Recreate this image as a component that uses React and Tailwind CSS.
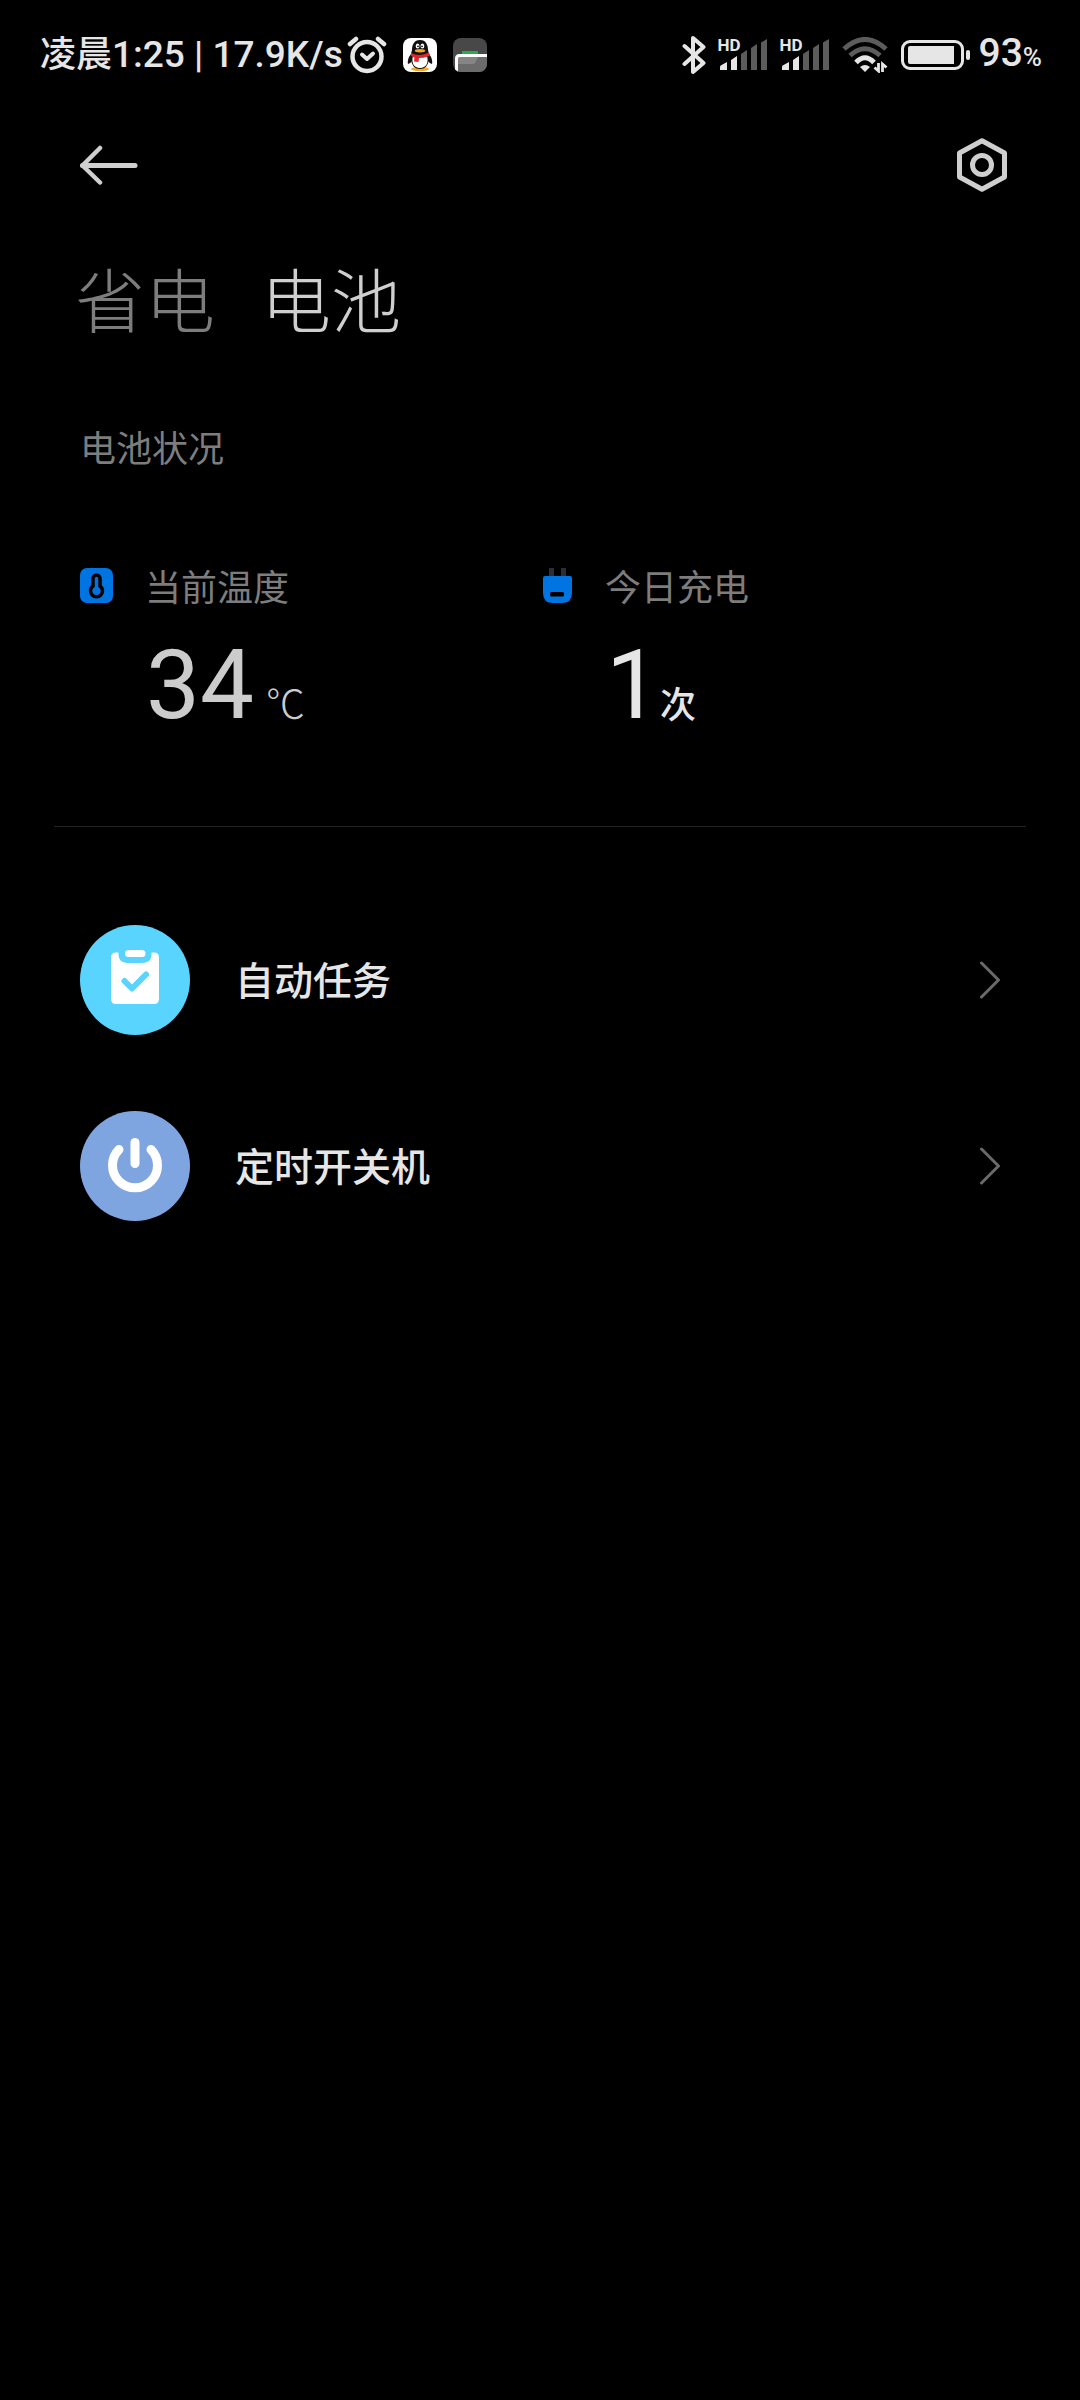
const dimText = "text-[#7d7d7d]";

function AlarmIcon() {
  return (
    <svg width="40" height="38" viewBox="0 0 40 38" fill="none" stroke="#e6e6e6" strokeLinecap="round">
      <circle cx="20" cy="20.500" r="14.500" strokeWidth="4.500" />
      <path d="M3 8 L9 3 M37 8 L31 3" strokeWidth="4.500" />
      <path d="M15 18.500 L20 23 L26 17.500" strokeWidth="4" strokeLinejoin="round" />
    </svg>
  );
}

function QQIcon() {
  return (
    <svg width="34" height="34" viewBox="0 0 34 34">
      <rect width="34" height="34" rx="8" fill="#fff" />
      <ellipse cx="17" cy="31" rx="9" ry="2" fill="#f5a81c" />
      <path d="M8 16 Q4 21 5 26 Q7 26 9 23 Z M26 16 Q30 21 29 26 Q27 26 25 23 Z" fill="#111" />
      <path d="M17 2 C11 2 9 7 9 12 C7 18 7 31 17 31 C27 31 27 18 25 12 C25 7 23 2 17 2 Z" fill="#111" />
      <path d="M10 18 Q17 21 24 18 C26 25 23 30 17 30 C11 30 8 25 10 18 Z" fill="#fff" />
      <ellipse cx="14.6" cy="8" rx="1.9" ry="2.6" fill="#fff" />
      <ellipse cx="19.4" cy="8" rx="1.9" ry="2.6" fill="#fff" />
      <circle cx="15" cy="8.3" r="0.9" fill="#111" />
      <circle cx="19" cy="8.3" r="0.9" fill="#111" />
      <ellipse cx="17" cy="12.7" rx="5.2" ry="1.7" fill="#f5a81c" />
      <path d="M8 15 Q17 19 26 14.5 L27 17.5 Q22 20 16 20 L15.5 24 L11 23.5 L11.5 19.5 L8 18 Z" fill="#e3242b" />
    </svg>
  );
}

function CardIcon() {
  return (
    <svg width="34" height="34" viewBox="0 0 34 34">
      <clipPath id="card-clip">
        <rect width="34" height="34" rx="8" />
      </clipPath>
      <g clipPath="url(#card-clip)">
        <rect width="34" height="34" fill="#484848" />
        <rect x="9" y="13" width="16" height="4" fill="#1fb14c" />
        <path d="M3.5 34 V20 Q3.5 17.5 6 17.5 H34 V34 Z" fill="#6b6b6b" />
        <path d="M5 19 H25 L22 25 Q21 26 20 26 H5 Z" fill="#858585" />
        <path d="M3.5 34 V20.5 Q3.5 17.5 6.5 17.5 H34" fill="none" stroke="#fff" strokeWidth="3" />
      </g>
    </svg>
  );
}

function BluetoothIcon() {
  return (
    <svg width="24" height="40" viewBox="0 0 24 40" fill="none" stroke="#e6e6e6" strokeWidth="4" strokeLinecap="round" strokeLinejoin="round">
      <path d="M2.5 11 L21.5 28 L11 37 V3 L21.5 12 L2.5 29" />
    </svg>
  );
}

function SignalIcon() {
  return (
    <div className="relative flex h-8 w-[50px] items-end">
      <span className="absolute -top-px left-0 font-['Roboto'] text-[17px] leading-[14px] font-bold text-[#e6e6e6]">
        HD
      </span>
      <svg width="50" height="32" viewBox="0 0 50 32">
        <g fill="#e6e6e6">
          <path d="M2 31 V28 Q2 26.500 3.500 26 L9 23 V31 Z" />
          <path d="M13 31 V21 L19 17 V31 Z" />
        </g>
        <g fill="#5c5c5c">
          <path d="M23 31 V15 L29 11 V31 Z" />
          <path d="M33 31 V9 L39 5 V31 Z" />
          <path d="M43 31 V3.500 L49 0 V31 Z" />
        </g>
      </svg>
    </div>
  );
}

function WifiIcon() {
  return (
    <svg width="47" height="36" viewBox="0 0 47 36" fill="none">
      <path d="M2 12 Q23 -7 44 12" stroke="#5c5c5c" strokeWidth="5" />
      <path d="M8 18.500 Q23 5 38 18.500" stroke="#5c5c5c" strokeWidth="5" />
      <path d="M14 25.500 Q23 16 32 25.500" stroke="#e6e6e6" strokeWidth="5" />
      <path d="M18 30 Q23 26 28 30 L23 35 Z" fill="#e6e6e6" />
      <path d="M36.500 26 V34 L32.500 30.500 M40.500 35 V27 L44.500 30.500" stroke="#e6e6e6" strokeWidth="2.800" />
    </svg>
  );
}

function BatteryIcon() {
  return (
    <svg width="70" height="30" viewBox="0 0 70 30">
      <rect x="1.500" y="1.500" width="60" height="27" rx="7.500" fill="none" stroke="#e6e6e6" strokeWidth="3" />
      <path d="M9 6 H53 V24 H9 Q7 24 7 22 V8 Q7 6 9 6 Z" fill="#e6e6e6" />
      <rect x="65" y="10" width="4" height="10" rx="2" fill="#e6e6e6" />
    </svg>
  );
}

function BackIcon() {
  return (
    <svg width="58" height="40" viewBox="0 0 58 40" fill="none" stroke="#cfcfcf" strokeLinecap="round" strokeLinejoin="round">
      <path d="M2.500 20.500 H55" strokeWidth="5" />
      <path d="M20 3 L2.500 20.500 L20 37.500" strokeWidth="4.500" />
    </svg>
  );
}

function SettingsIcon() {
  return (
    <svg width="50" height="54" viewBox="0 0 50 54" fill="none" stroke="#cfcfcf" strokeWidth="5" strokeLinejoin="round">
      <path d="M25 2.800 L47.500 15 V39 L25 51.200 L2.500 39 V15 Z" />
      <circle cx="25" cy="27" r="9.500" />
    </svg>
  );
}

function ThermometerIcon() {
  return (
    <svg width="33" height="35" viewBox="0 0 33 35">
      <rect width="33" height="35" rx="7" fill="#0074e0" />
      <path
        d="M13 10.500 a3.500 3.500 0 0 1 7 0 V18 a6 6 0 1 1 -7 0 Z"
        fill="none"
        stroke="#000"
        strokeWidth="3.500"
      />
    </svg>
  );
}

function PlugIcon() {
  return (
    <svg width="33" height="35" viewBox="0 0 33 35">
      <rect x="9" y="0" width="5" height="10" fill="#2a2f36" />
      <rect x="21" y="0" width="5" height="10" fill="#2a2f36" />
      <path d="M5 8 H30 Q32 8 32 10 V25 Q32 35 22 35 H13 Q3 35 3 25 V10 Q3 8 5 8 Z" fill="#0074e0" />
      <rect x="10" y="24" width="14" height="4.500" rx="1.500" fill="#000" />
    </svg>
  );
}

function TaskIcon() {
  return (
    <svg width="110" height="110" viewBox="0 0 110 110">
      <circle cx="55" cy="55" r="55" fill="#59d4ff" />
      <path
        d="M38.500 27.500 H36 Q31 27.500 31 32.500 V74 Q31 79 36 79 H74 Q79 79 79 74 V32.500 Q79 27.500 74 27.500 H71.500 Q72 38 62 38 H48 Q38 38 38.500 27.500 Z"
        fill="#fff"
      />
      <rect x="45" y="25" width="20.500" height="7" rx="3.500" fill="#fff" />
      <path d="M44.500 56 L52 63.500 L66 49.500" fill="none" stroke="#59d4ff" strokeWidth="6" strokeLinecap="round" strokeLinejoin="round" />
    </svg>
  );
}

function PowerIcon() {
  return (
    <svg width="110" height="110" viewBox="0 0 110 110" fill="none" stroke="#fff" strokeWidth="9" strokeLinecap="round">
      <circle cx="55" cy="55" r="55" fill="#7ea5df" stroke="none" />
      <path d="M55 31.500 V52.500" />
      <path d="M39 38.500 A22.500 22.500 0 1 0 71 38.500" />
    </svg>
  );
}

function ChevronIcon() {
  return (
    <svg width="20" height="38" viewBox="0 0 20 38" fill="none" stroke="#6a6a6a" strokeWidth="3" strokeLinecap="round" strokeLinejoin="round">
      <path d="M1.500 2 L18.500 19 L1.500 36" />
    </svg>
  );
}

const stats = [
  {
    label: "当前温度",
    value: "34",
    unit: "℃",
    Icon: ThermometerIcon,
    color: "text-[#cccccc]",
    unitCls: "ml-3 text-[39px] font-light",
  },
  {
    label: "今日充电",
    value: "1",
    unit: "次",
    Icon: PlugIcon,
    color: "text-[#e6e6e6]",
    unitCls: "text-[36px] font-medium",
  },
];

const links = [
  { label: "自动任务", Icon: TaskIcon },
  { label: "定时开关机", Icon: PowerIcon },
];

function StatusBar() {
  return (
    <div className="flex h-[110px] items-center justify-between pr-[38px] pl-10 text-[#e6e6e6]">
      <div className="flex items-center">
        <span className="font-['Roboto','Noto_Sans_CJK_SC',sans-serif] text-[37px] leading-10 font-medium">
          <span className="text-[36px]">凌晨</span>1:25 | 17.9K/s
        </span>
        <div className="ml-1 flex items-center gap-4">
          <AlarmIcon />
          <QQIcon />
          <CardIcon />
        </div>
      </div>
      <div className="flex items-center gap-3">
        <BluetoothIcon />
        <SignalIcon />
        <SignalIcon />
        <WifiIcon />
        <div className="flex items-center gap-2">
          <BatteryIcon />
          <span className="font-['Roboto',sans-serif] text-[39px] leading-10 font-medium">
            93<span className="text-[26px]">%</span>
          </span>
        </div>
      </div>
    </div>
  );
}

function Stat({ label, value, unit, Icon, color, unitCls }) {
  return (
    <div>
      <dt className={`flex items-center gap-8 text-[36px] leading-10 ${dimText}`}>
        <Icon />
        {label}
      </dt>
      <dd className={`mt-6 flex items-baseline pl-[66px] leading-[112px] ${color}`}>
        <span className="font-['Roboto',sans-serif] text-[96px]">{value}</span>
        <span className={unitCls}>{unit}</span>
      </dd>
    </div>
  );
}

export default function App() {
  return (
    <div className="min-h-screen bg-black font-['Noto_Sans_CJK_SC',sans-serif]" lang="zh-CN">
      <StatusBar />

      <header className="flex h-[110px] items-center justify-between pr-[73px] pl-20">
        <button type="button" aria-label="返回">
          <BackIcon />
        </button>
        <button type="button" aria-label="设置">
          <SettingsIcon />
        </button>
      </header>

      <nav className="mt-[38px] flex gap-[46px] px-[75px] text-[70px] leading-20 font-light">
        <button type="button" className={dimText}>
          省电
        </button>
        <button type="button" className="text-[#cfcfcf]" aria-current="page">
          电池
        </button>
      </nav>

      <main>
        <h2 className={`mt-22 px-20 text-[36px] leading-10 ${dimText}`}>电池状况</h2>

        <dl className="mt-[99px] grid grid-cols-2 px-20">
          {stats.map((s) => (
            <Stat key={s.label} {...s} />
          ))}
        </dl>

        <hr className="mx-[54px] mt-[68px] border-[#222222]" />

        <ul className="mt-15">
          {links.map(({ label, Icon }) => (
            <li key={label}>
              <button type="button" className="flex w-full items-center px-20 py-[38px] text-left">
                <Icon />
                <span className="ml-[45px] flex-1 pb-1 text-[39px] leading-12 font-medium text-[#e6e6e6]">{label}</span>
                <ChevronIcon />
              </button>
            </li>
          ))}
        </ul>
      </main>
    </div>
  );
}
